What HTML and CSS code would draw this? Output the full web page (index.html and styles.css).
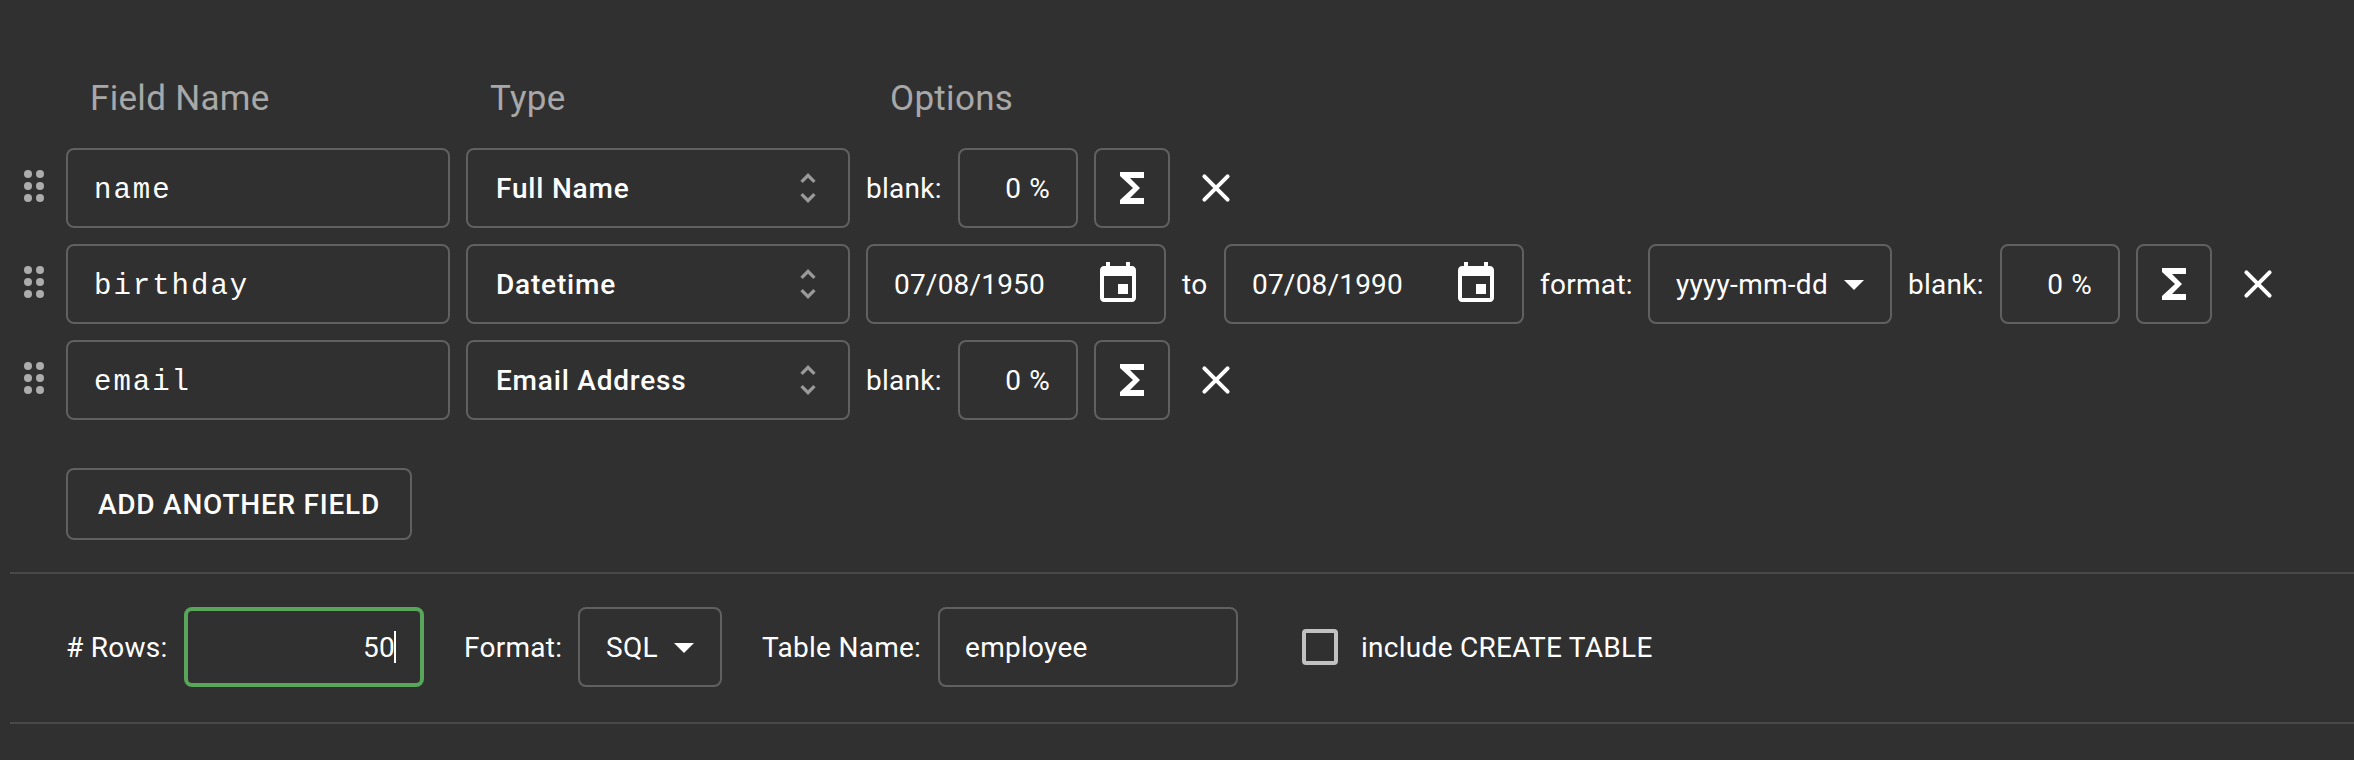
FILE: index.html
```html
<!DOCTYPE html>
<html lang="en">
<head>
<meta charset="utf-8">
<title>Schema</title>
<link rel="stylesheet" href="styles.css">
</head>
<body>
<svg class="defs" width="0" height="0">
  <symbol id="drag" viewBox="0 0 24 24"><circle cx="9" cy="6" r="2"/><circle cx="15" cy="6" r="2"/><circle cx="9" cy="12" r="2"/><circle cx="15" cy="12" r="2"/><circle cx="9" cy="18" r="2"/><circle cx="15" cy="18" r="2"/></symbol>
  <symbol id="unfold" viewBox="0 0 24 24"><path d="M12 5.83 15.17 9l1.41-1.41L12 3 7.41 7.59 8.83 9 12 5.83zm0 12.34L8.83 15l-1.41 1.41L12 21l4.59-4.59L15.17 15 12 18.17z"/></symbol>
  <symbol id="sigma" viewBox="0 0 24 24"><path d="M18 4H6v2l6.5 6L6 18v2h12v-3h-7l5-5-5-5h7z"/></symbol>
  <symbol id="close" viewBox="0 0 24 24"><path d="M6.2 6.2 17.8 17.8M17.8 6.2 6.2 17.8" fill="none" stroke="currentColor" stroke-width="2" stroke-linecap="round"/></symbol>
  <symbol id="event" viewBox="0 0 24 24"><path d="M17 12h-5v5h5v-5zM16 1v2H8V1H6v2H5c-1.11 0-1.99.9-1.99 2L3 19c0 1.1.89 2 2 2h14c1.1 0 2-.9 2-2V5c0-1.1-.9-2-2-2h-1V1h-2zm3 18H5V8h14v11z"/></symbol>
  <symbol id="down" viewBox="0 0 24 24"><path d="M7 10l5 5 5-5z"/></symbol>
</svg>
<main class="schema">
  <div class="head"><span>Field Name</span><span>Type</span><span>Options</span></div>
  <div class="rows">
    <div class="row">
      <svg class="icon drag"><use href="#drag"/></svg>
      <div class="box name">name</div>
      <div class="box type">Full Name<svg class="icon unfold"><use href="#unfold"/></svg></div>
      <span class="label blank">blank:</span>
      <div class="box percent"><span>0</span><span>%</span></div>
      <div class="box formula"><svg class="icon"><use href="#sigma"/></svg></div>
      <svg class="icon close"><use href="#close"/></svg>
    </div>
    <div class="row">
      <svg class="icon drag"><use href="#drag"/></svg>
      <div class="box name">birthday</div>
      <div class="box type">Datetime<svg class="icon unfold"><use href="#unfold"/></svg></div>
      <div class="box date">07/08/1950<svg class="icon"><use href="#event"/></svg></div>
      <span class="label to">to</span>
      <div class="box date">07/08/1990<svg class="icon"><use href="#event"/></svg></div>
      <span class="label fmt">format:</span>
      <div class="box pattern">yyyy-mm-dd<svg class="icon"><use href="#down"/></svg></div>
      <span class="label blank">blank:</span>
      <div class="box percent"><span>0</span><span>%</span></div>
      <div class="box formula"><svg class="icon"><use href="#sigma"/></svg></div>
      <svg class="icon close"><use href="#close"/></svg>
    </div>
    <div class="row">
      <svg class="icon drag"><use href="#drag"/></svg>
      <div class="box name">email</div>
      <div class="box type">Email Address<svg class="icon unfold"><use href="#unfold"/></svg></div>
      <span class="label blank">blank:</span>
      <div class="box percent"><span>0</span><span>%</span></div>
      <div class="box formula"><svg class="icon"><use href="#sigma"/></svg></div>
      <svg class="icon close"><use href="#close"/></svg>
    </div>
  </div>
  <div class="box add">ADD ANOTHER FIELD</div>
  <div class="output">
    <span class="label count-label"># Rows:</span>
    <div class="box count">50<i class="caret"></i></div>
    <span class="label format-label">Format:</span>
    <div class="box format">SQL<svg class="icon"><use href="#down"/></svg></div>
    <span class="label table-label">Table Name:</span>
    <div class="box table">employee</div>
    <span class="check"></span>
    <span class="label">include CREATE TABLE</span>
  </div>
</main>
</body>
</html>
```
FILE: styles.css
```css
* { box-sizing: border-box; }
body {
  margin: 0;
  height: 760px;
  overflow: hidden;
  background: #303030;
  color: #fff;
  font: 28px/41px Roboto, sans-serif;
  letter-spacing: 0.28px;
  white-space: nowrap;
}
.defs { position: absolute; }
.schema { padding: 77px 0 0 10px; }
.head {
  display: grid;
  grid-template-columns: 400px 400px 400px;
  padding-left: 80px;
  height: 71px;
  font-size: 35px;
  line-height: 44px;
  letter-spacing: 0.3px;
  color: #a8a8a8;
}
.rows { display: flex; flex-direction: column; gap: 16px; }
.row { display: flex; align-items: center; gap: 16px; height: 80px; }
.icon { width: 48px; height: 48px; flex: none; fill: currentColor; }
.drag { color: #acacac; margin: -4px -8px 0 0; }
.box {
  display: flex;
  align-items: center;
  flex: none;
  height: 80px;
  padding: 0 26px;
  border: 2px solid #606060;
  border-radius: 8px;
}
.box .icon { margin-left: auto; }
.name { width: 384px; padding-top: 4px; font-family: "Liberation Mono", monospace; font-size: 29px; letter-spacing: 2px; }
.type { width: 384px; padding-right: 20px; padding-left: 28px; font-weight: 500; letter-spacing: 0.8px; }
.type .unfold { width: 40px; height: 40px; color: #999; }
.label { flex: none; }
.blank { width: 76px; }
.to { width: 26px; }
.fmt { width: 92px; }
.percent { width: 120px; justify-content: flex-end; gap: 8px; }
.formula { width: 76px; padding: 0; justify-content: center; }
.formula .icon { margin: 0; }
.close { margin-left: 6px; }
.date { width: 300px; padding-right: 22px; letter-spacing: 0.2px; }
.pattern { width: 244px; padding-right: 12px; }
.add { width: 346px; height: 72px; margin: 48px 0 32px 56px; padding: 0 30px; font-weight: 500; letter-spacing: 0.76px; }
.output {
  display: flex;
  align-items: center;
  height: 152px;
  padding: 0 0 2px 56px;
  border-top: 2px solid #494949;
  border-bottom: 2px solid #494949;
}
.count-label { width: 118px; }
.count { width: 240px; justify-content: flex-end; border: 4px solid #57a65a; padding-right: 24px; margin-right: 40px; }
.caret { width: 2px; height: 32px; margin-left: -1px; background: #fff; }
.format-label { width: 114px; }
.format { width: 144px; padding-right: 12px; margin-right: 40px; }
.table-label { width: 176px; }
.table { width: 300px; padding-left: 25px; margin-right: 64px; }
.check { flex: none; width: 36px; height: 36px; margin-right: 23px; border: 4px solid #c1c1c1; border-radius: 4px; }
```
